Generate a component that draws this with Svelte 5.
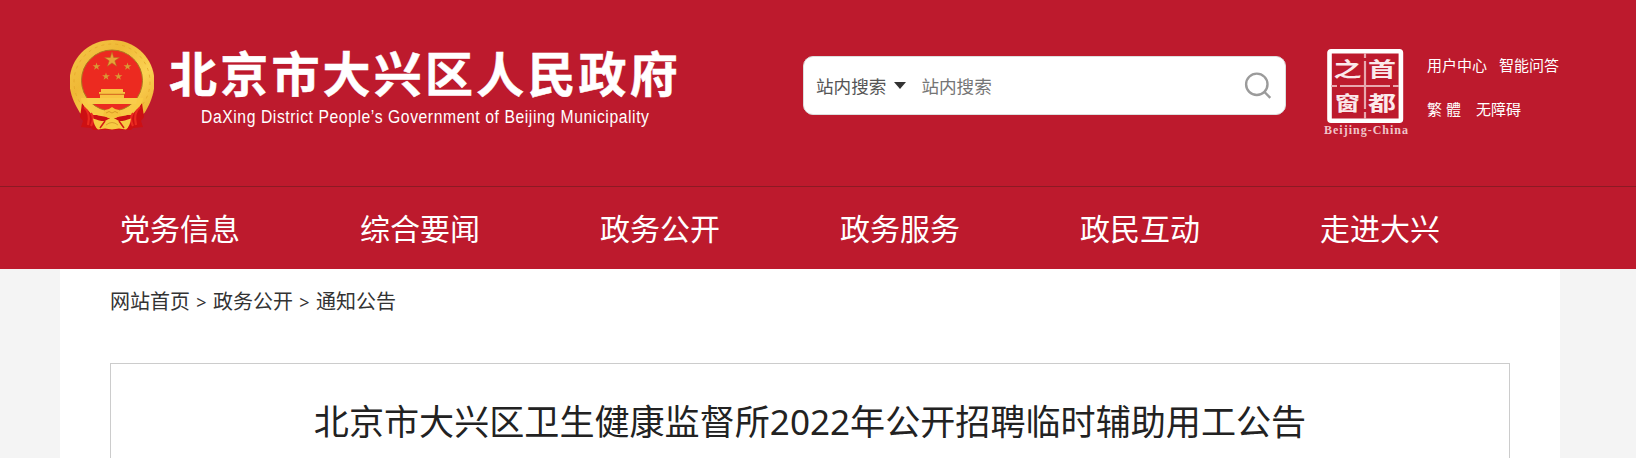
<script lang="ts">
	let keyword = $state('');

	const navItems = ['党务信息', '综合要闻', '政务公开', '政务服务', '政民互动', '走进大兴'];
	const crumbs = ['网站首页', '政务公开', '通知公告'];

	// small stars of the emblem: centre x, centre y
	const stars = [
		[26.5, 26.5],
		[36, 36.5],
		[48.5, 36.5],
		[57.5, 26.5],
	];
</script>

<header class="header">
	<div class="container top">
		<a class="logo" href="/" aria-label="北京市大兴区人民政府">
			<svg class="emblem" viewBox="0 0 84 92" width="84" height="92">
				<defs>
					<linearGradient id="gold" x1="0" y1="0" x2="1" y2="1">
						<stop offset="0" stop-color="#f6c74a" />
						<stop offset="0.35" stop-color="#efb936" />
						<stop offset="0.65" stop-color="#fbd253" />
						<stop offset="1" stop-color="#e9a92b" />
					</linearGradient>
				</defs>
				<path
					d="M42 0C66 0 84.500 19 84.500 42c0 12-5 23-10 31L60 82H24L10 73C5 65-.5 54-.5 42-.5 19 18 0 42 0z"
					fill="url(#gold)"
				/>
				<circle cx="42" cy="42" r="38" fill="none" stroke="#e4a72a" stroke-width="0.8" stroke-dasharray="3 4" />
				<path d="M12 63l-2 14 3 4-2 6 10 1 2 2h38l2-2 10-1-2-6 3-4-2-14-10 12H22z" fill="#cd1013" />
				<path
					d="M14 67q7 6 4 18M21 73q4 6 0 13M70 67q-7 6-4 18M63 73q-4 6 0 13"
					fill="none"
					stroke="#ea2a20"
					stroke-width="2.2"
				/>
				<path d="M11 58h62c0 8-9 14-17 17.500l-9 1.500h-10l-9-1.500C20 72 11 66 11 58z" fill="#f8ca45" />
				<circle cx="42" cy="40.500" r="30.500" fill="#ec2a20" stroke="#ad7821" stroke-width="1" />
				<path
					d="M42 12l1.700 5.500h5.800l-4.700 3.300 1.800 5.500-4.600-3.400-4.600 3.400 1.800-5.500-4.700-3.300h5.800z"
					fill="#e6a437"
					stroke="#b36a20"
					stroke-width="0.5"
				/>
				{#each stars as [x, y]}
					<path
						transform="translate({x} {y})"
						d="M0-4l.9 2.800h3L1.500.5l.9 2.800L0 1.600l-2.400 1.700.9-2.800-2.400-1.700h3z"
						fill="#d99a34"
					/>
				{/each}
				<path d="M31 49h22v3h2v2H29v-2h2zM30 54.500h24V58H30z" fill="#f9c342" />
				<path d="M29 54.200h26" stroke="#c27619" stroke-width="0.7" />
				<path d="M16.500 58h51l-1.500 6H18z" fill="#f9cc4b" />
				<path d="M33 75l2-5 4-1 3-2 3 2 4 1 2 5-5 3h-8z" fill="#f6c13b" />
				<path d="M36 73q3-3 6 0 3-3 6 0" fill="none" stroke="#d0901f" stroke-width="0.8" />
				<path d="M23 78.500q8 3 12 2.500l7-4 7 4q4 .5 12-2.500-1 8-5 11l-7-1-7 1-7-1-7 1q-4-3-5-11z" fill="#f7c942" />
				<path d="M35 81l-5 7M49 81l5 7" stroke="#d31a17" stroke-width="1.500" />
				<path d="M36 85q6-5 12 0" fill="none" stroke="#dba02d" />
			</svg>
			<div class="names">
				<span class="name-cn">北京市大兴区人民政府</span>
				<svg class="name-en" width="450" height="26" viewBox="0 0 450 26">
					<text transform="translate(1 18) scale(0.85 1)" textLength="527">DaXing District People’s Government of Beijing Municipality</text>
				</svg>
			</div>
		</a>

		<form class="search" onsubmit={(e) => e.preventDefault()}>
			<span class="scope">站内搜索</span>
			<span class="caret"></span>
			<input type="text" bind:value={keyword} placeholder="站内搜索" />
			<button type="submit" aria-label="搜索">
				<svg width="28" height="28" viewBox="0 0 28 28" fill="none" stroke="#9b9b9b" stroke-width="2.400">
					<circle cx="12.800" cy="12.300" r="10.700" />
					<path d="M20 19.500l6.300 6.300" />
				</svg>
			</button>
		</form>

		<a class="capital" href="/" aria-label="首都之窗">
			<svg width="86" height="90" viewBox="0 0 86 90">
				<rect x="6.500" y="2.300" width="71.400" height="69.400" rx="1.500" fill="none" stroke="#fff" stroke-width="4.600" />
				<path d="M42 4v5M42 12v48M42 63v7M8 37h6M17 37h50M70 37h6" stroke="#e8a7ae" stroke-width="2.200" />
				<g class="seal-text">
					<text transform="translate(10.500 28) scale(1.400 1)">之</text>
					<text transform="translate(45 28) scale(1.400 1)">首</text>
					<text transform="translate(12 62) scale(1.250 1)">窗</text>
					<text transform="translate(45 62) scale(1.400 1)">都</text>
				</g>
				<text class="seal-en" x="1" y="85" textLength="84" lengthAdjust="spacing">Beijing-China</text>
			</svg>
		</a>

		<div class="links">
			<div class="row">
				<a href="/">用户中心</a>
				<a href="/">智能问答</a>
			</div>
			<div class="row second">
				<a href="/">繁 體</a>
				<a href="/">无障碍</a>
			</div>
		</div>
	</div>

	<nav class="nav">
		<ul class="container">
			{#each navItems as item}
				<li><a href="/">{item}</a></li>
			{/each}
		</ul>
	</nav>
</header>

<main class="container content">
	<div class="crumbs">
		{#each crumbs as crumb, i}
			{#if i > 0}<span class="sep">&gt;</span>{/if}
			<a href="/">{crumb}</a>
		{/each}
	</div>
	<article class="article">
		<h1>北京市大兴区卫生健康监督所2022年公开招聘临时辅助用工公告</h1>
	</article>
</main>

<style>
	:global(body) {
		background: #f4f4f4;
		font-family: 'Noto Sans', 'Noto Sans CJK SC', sans-serif;
		overflow: hidden;
	}

	a {
		color: inherit;
		text-decoration: none;
	}

	.container {
		width: 1500px;
		margin-left: 60px;
		box-sizing: border-box;
	}

	.header {
		background: #bd1a2d;
		color: #fff;
	}

	.top {
		display: flex;
		align-items: flex-start;
		height: 186px;
	}

	.logo {
		display: flex;
		width: 743px;
		padding: 40px 0 0 10px;
		box-sizing: border-box;
	}

	.emblem {
		flex: none;
	}

	.names {
		display: flex;
		flex-direction: column;
		padding: 5px 0 0 15px;
	}

	.name-cn {
		font-family: 'Noto Sans CJK SC', sans-serif;
		font-size: 48px;
		font-weight: 700;
		line-height: 52px;
		letter-spacing: 3.2px;
		white-space: nowrap;
		-webkit-text-stroke: 0.5px #fff;
	}

	.name-en {
		margin-left: 31px;
		margin-top: 8px;
		font-family: 'Liberation Sans', sans-serif;
		font-size: 18.5px;
		fill: #fff;
		overflow: visible;
	}

	.search {
		display: flex;
		align-items: center;
		width: 483px;
		height: 59px;
		margin-top: 56px;
		padding: 0 13px 0 12px;
		border: 1px solid #ddd;
		border-radius: 10px;
		box-sizing: border-box;
		background: #fff;
		color: #555;
		font-size: 17.6px;
	}

	.caret {
		margin: 0 15px 0 8px;
		border: 6px solid transparent;
		border-top: 7px solid #333;
		border-bottom: 0;
	}

	.search input {
		flex: 1;
		min-width: 0;
		padding: 0;
		border: 0;
		outline: none;
		font: inherit;
	}

	.search input::placeholder {
		color: #757575;
	}

	.search button {
		padding: 0;
		border: 0;
		background: none;
		cursor: pointer;
	}

	.search button svg {
		display: block;
	}

	.capital {
		margin: 49px 0 0 37px;
	}

	.seal-text {
		font-family: 'Noto Sans CJK SC', sans-serif;
		font-size: 20px;
		font-weight: 700;
		fill: #fbe9eb;
	}

	.seal-en {
		font-family: 'Liberation Serif', serif;
		font-size: 12px;
		font-weight: 700;
		fill: #f0c4c9;
	}

	.links {
		margin: 53px 0 0 18px;
		font-size: 15px;
		line-height: 24px;
		white-space: nowrap;
	}

	.row {
		display: flex;
		gap: 12px;
	}

	.second {
		gap: 15px;
		margin-top: 20px;
	}

	.nav {
		height: 83px;
		border-top: 1px solid #8c1a24;
		box-sizing: border-box;
	}

	.nav ul {
		display: flex;
		margin-top: 0;
		margin-bottom: 0;
		padding: 0;
		list-style: none;
	}

	.nav li {
		width: 240px;
		font-size: 30px;
		line-height: 84px;
		text-align: center;
	}

	.content {
		height: 189px;
		padding: 0 50px;
		background: #fff;
	}

	.crumbs {
		display: flex;
		height: 94px;
		font-size: 20px;
		line-height: 66px;
		color: #333;
	}

	.sep {
		width: 23px;
		font-size: 18px;
		text-align: center;
	}

	.article {
		height: 95px;
		border: 1px solid #ccc;
		border-bottom: 0;
		box-sizing: border-box;
	}

	h1 {
		margin: 32px 0 0;
		color: #222;
		font-size: 35.1px;
		font-weight: 400;
		line-height: 50px;
		text-align: center;
	}
</style>
